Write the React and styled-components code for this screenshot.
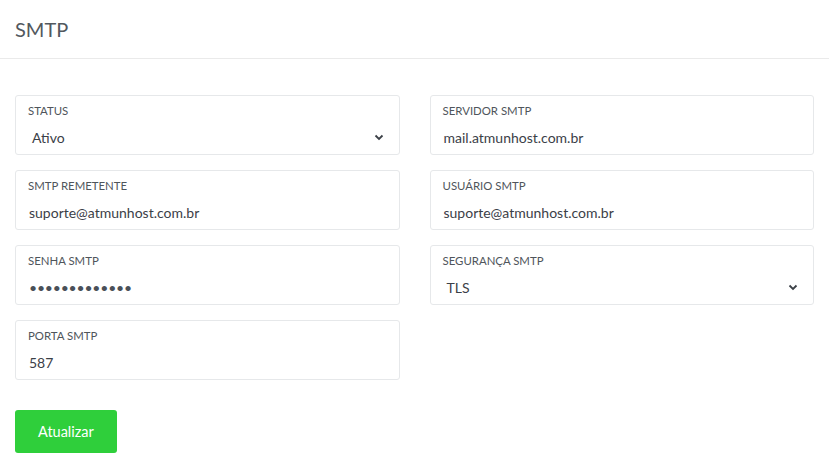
import React from 'react';
import styled, { createGlobalStyle } from 'styled-components';

const GlobalStyle = createGlobalStyle`
    body {
        margin: 0;
        background: #fff;
        font-family: Lato, 'Open Sans', sans-serif;
    }
`;

const Header = styled.div`
    height: 58px;
    padding: 0 15px;
    display: flex;
    align-items: center;
    border-bottom: 1px solid #eaeaea;
`;

const Title = styled.h1`
    margin: 0;
    font-size: 20px;
    font-weight: 400;
    color: #52585e;
`;

const Form = styled.form`
    padding: 36px 15px 20px;
`;

const Grid = styled.div`
    display: grid;
    grid-template-columns: 1fr 1fr;
    column-gap: 30px;
    row-gap: 15px;
`;

const Field = styled.label`
    display: flex;
    flex-direction: column;
    height: 60px;
    box-sizing: border-box;
    padding: 7px 12px 0;
    border: 1px solid #e6e8ea;
    border-radius: 3px;
    position: relative;
`;

const Label = styled.span`
    font-size: 11.4px;
    line-height: 16px;
    text-transform: uppercase;
    color: #4f555b;
`;

const Value = styled.span`
    margin-top: 9px;
    padding-left: ${(props) => (props.select ? '4px' : '1px')};
    font-size: 14px;
    line-height: 20px;
    color: ${(props) => (props.dots ? '#4a5058' : '#3b4047')};
    letter-spacing: ${(props) => (props.dots ? '-0.2px' : '0')};
`;

const Chevron = styled.svg`
    position: absolute;
    right: 15px;
    top: 38px;
`;

const Button = styled.button`
    margin-top: 30px;
    height: 43px;
    padding: 0 23px;
    border: none;
    border-radius: 3px;
    background: #2fcf3b;
    color: #fff;
    font-family: Lato, sans-serif;
    font-size: 14.5px;
`;

const fields = [
    { label: 'Status', value: 'Ativo', select: true },
    { label: 'Servidor SMTP', value: 'mail.atmunhost.com.br' },
    { label: 'SMTP Remetente', value: 'suporte@atmunhost.com.br' },
    { label: 'Usuário SMTP', value: 'suporte@atmunhost.com.br' },
    { label: 'Senha SMTP', value: '•••••••••••••', dots: true },
    { label: 'Segurança SMTP', value: 'TLS', select: true },
    { label: 'Porta SMTP', value: '587' },
];

const App = () => (
    <>
        <GlobalStyle />
        <Header>
            <Title>SMTP</Title>
        </Header>
        <Form onSubmit={(e) => e.preventDefault()}>
            <Grid>
                {fields.map((f) => (
                    <Field key={f.label}>
                        <Label>{f.label}</Label>
                        <Value select={f.select} dots={f.dots}>
                            {f.value}
                        </Value>
                        {f.select && (
                            <Chevron width='10' height='7' viewBox='0 0 10 7'>
                                <polyline
                                    points='1.5,1.5 5,5 8.5,1.5'
                                    fill='none'
                                    stroke='#3b4047'
                                    strokeWidth='1.8'
                                />
                            </Chevron>
                        )}
                    </Field>
                ))}
            </Grid>
            <Button type='submit'>Atualizar</Button>
        </Form>
    </>
);

export default App;
